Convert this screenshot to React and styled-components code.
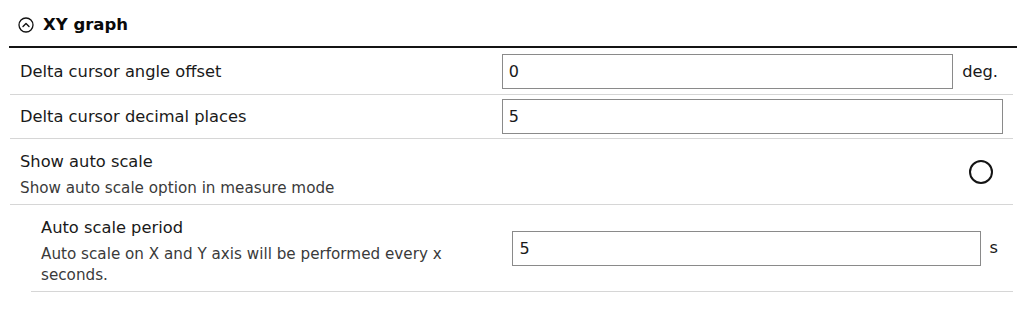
import React from "react";
import styled, { createGlobalStyle } from "styled-components";

const GlobalStyle = createGlobalStyle`
  html, body {
    margin: 0;
    padding: 0;
    background: #ffffff;
  }
  body {
    font-family: "DejaVu Sans", "Liberation Sans", sans-serif;
    color: #1a1a1a;
  }
`;

const Panel = styled.div`
  padding: 0 7px 0 9px;
`;

const Header = styled.div`
  display: flex;
  align-items: center;
  gap: 9px;
  height: 48px;
  box-sizing: border-box;
  padding: 6px 0 2px 9px;
  border-bottom: 2px solid #141414;
`;

const HeaderTitle = styled.h2`
  margin: 0;
  font-size: 16.5px;
  line-height: 20px;
  font-weight: bold;
  color: #0a0a0a;
`;

const Rows = styled.div`
  display: flex;
  flex-direction: column;
  margin: 0 4px 0 1px;
`;

const Row = styled.div`
  display: flex;
  align-items: center;
  margin-left: ${(p) => (p.$indent ? "21px" : "0")};
  padding: ${(p) => p.$pad || "4px 10px"};
  border-bottom: 1px solid #d6d6d6;
`;

const LabelCol = styled.div`
  flex: 0 0 49%;
  padding: ${(p) => (p.$block ? "12px 0 5px" : "0")};
`;

const Label = styled.div`
  font-size: 16.3px;
  line-height: 22px;
  color: #1a1a1a;
`;

const Description = styled.div`
  margin-top: 5px;
  max-width: 420px;
  font-size: 15.2px;
  line-height: 21px;
  color: #3a3a3a;
`;

const Control = styled.div`
  flex: 1;
  display: flex;
  align-items: center;
  justify-content: ${(p) => (p.$end ? "flex-end" : "flex-start")};
`;

const TextInput = styled.input`
  flex: 1;
  min-width: 0;
  height: 35px;
  box-sizing: border-box;
  padding: 0 6px;
  border: 1px solid #8a8a8a;
  background: #ffffff;
  font-family: "DejaVu Sans", "Liberation Sans", sans-serif;
  font-size: 16px;
  color: #1a1a1a;
  outline: none;
`;

const Unit = styled.span`
  margin-left: 9px;
  padding-right: 5px;
  font-size: 16.3px;
  line-height: 22px;
  color: #1a1a1a;
`;

const Radio = styled.span`
  display: block;
  width: 24px;
  height: 24px;
  box-sizing: border-box;
  margin-right: 10px;
  border: 2px solid #141414;
  border-radius: 50%;
`;

const CollapseIcon = () => (
  <svg width="16" height="16" viewBox="0 0 16 16" fill="none">
    <circle cx="8" cy="8" r="7" stroke="#111" strokeWidth="1.3" />
    <path
      d="M5 9.4 L8 6.4 L11 9.4"
      stroke="#111"
      strokeWidth="1.4"
      strokeLinecap="round"
      strokeLinejoin="round"
    />
  </svg>
);

const App = () => {
  return (
    <>
      <GlobalStyle />
      <Panel>
        <Header>
          <CollapseIcon />
          <HeaderTitle>XY graph</HeaderTitle>
        </Header>
        <Rows>
          <Row $pad="6px 10px 5px">
            <LabelCol>
              <Label>Delta cursor angle offset</Label>
            </LabelCol>
            <Control>
              <TextInput defaultValue="0" />
              <Unit>deg.</Unit>
            </Control>
          </Row>
          <Row>
            <LabelCol>
              <Label>Delta cursor decimal places</Label>
            </LabelCol>
            <Control>
              <TextInput defaultValue="5" />
            </Control>
          </Row>
          <Row $pad="0 10px">
            <LabelCol $block>
              <Label>Show auto scale</Label>
              <Description>Show auto scale option in measure mode</Description>
            </LabelCol>
            <Control $end>
              <Radio />
            </Control>
          </Row>
          <Row $pad="0 10px" $indent>
            <LabelCol $block>
              <Label>Auto scale period</Label>
              <Description>
                Auto scale on X and Y axis will be performed every x seconds.
              </Description>
            </LabelCol>
            <Control>
              <TextInput defaultValue="5" />
              <Unit>s</Unit>
            </Control>
          </Row>
        </Rows>
      </Panel>
    </>
  );
};

export default App;
